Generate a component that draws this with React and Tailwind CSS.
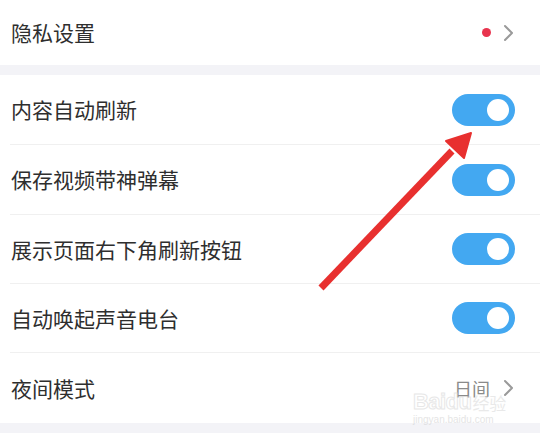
const font = { fontFamily: '"Noto Sans CJK SC", "Noto Sans", sans-serif' };

function Chevron() {
  return (
    <svg width="11" height="18" viewBox="0 0 11 18" fill="none" className="shrink-0">
      <path d="M2 2l7 7-7 7" stroke="#9a9a9a" strokeWidth="2" strokeLinecap="round" strokeLinejoin="round" />
    </svg>
  );
}

function Toggle() {
  return (
    <div className="w-[63px] h-[32px] rounded-full bg-[#43a8f1] flex items-center justify-end pr-[6px]">
      <div className="w-[22px] h-[22px] rounded-full bg-white" />
    </div>
  );
}

function Row({ label, height, border = true, children }) {
  return (
    <div className="pl-[10px]">
      <div
        className={`flex items-center justify-between pr-[25px] ${border ? "border-b border-[#f0f0f0]" : ""}`}
        style={{ height }}
      >
        <span className="text-[21px] text-[#2e2e2e] leading-none pl-px">{label}</span>
        {children}
      </div>
    </div>
  );
}

export default function App() {
  const toggles = [
    ["内容自动刷新", 70],
    ["保存视频带神弹幕", 70],
    ["展示页面右下角刷新按钮", 69],
    ["自动唤起声音电台", 69],
  ];

  return (
    <div className="relative w-[540px] h-[433px] bg-white overflow-hidden" style={font}>
      <Row label="隐私设置" height={65} border={false}>
        <div className="flex items-center gap-[12px] pr-px">
          <div className="w-[9px] h-[9px] rounded-full bg-[#e8344e]" />
          <Chevron />
        </div>
      </Row>
      <div className="h-[10px] bg-[#f3f3f7]" />
      {toggles.map(([label, h]) => (
        <Row key={label} label={label} height={h}>
          <Toggle />
        </Row>
      ))}
      <Row label="夜间模式" height={70} border={false}>
        <div className="flex items-center gap-[13px] pr-px">
          <span className="text-[18px] text-[#8a8a8a] leading-none">日间</span>
          <Chevron />
        </div>
      </Row>
      <div className="h-[11px] bg-[#f3f3f7]" />

      {/* watermark */}
      <div className="absolute left-[413px] top-[391px] flex flex-col items-start pointer-events-none opacity-60">
        <div className="flex items-center leading-none">
          <span className="text-[22px] font-bold text-transparent [-webkit-text-stroke:1px_#d8d8d8] tracking-tight" style={{ fontFamily: '"Liberation Sans", sans-serif' }}>
            Baidu
          </span>
          <span className="text-[17px] text-[#dcdcdc] ml-px">经验</span>
        </div>
        <span className="text-[10px] text-[#d4d4d4] leading-none mt-[2px]" style={{ fontFamily: '"Liberation Sans", sans-serif' }}>
          jingyan.baidu.com
        </span>
      </div>

      {/* annotation arrow */}
      <svg className="absolute inset-0 pointer-events-none" width="540" height="433" viewBox="0 0 540 433">
        <line x1="321" y1="288" x2="452" y2="151" stroke="#e8302f" strokeWidth="7" />
        <polygon points="471,133 446,141 464,158" fill="#e8302f" stroke="#e8302f" strokeWidth="2" strokeLinejoin="round" />
      </svg>
    </div>
  );
}
